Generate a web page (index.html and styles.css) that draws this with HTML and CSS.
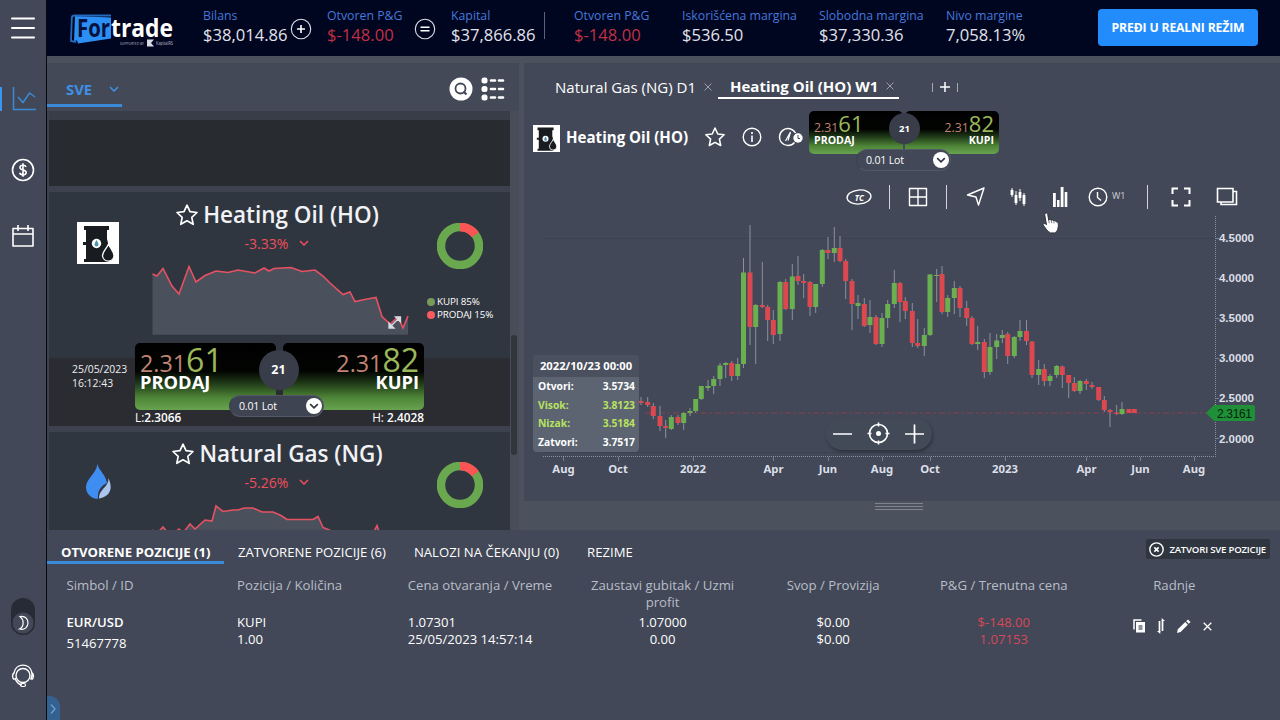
FILE: index.html
```html
<!DOCTYPE html>
<html lang="sr">
<head>
    <meta charset="UTF-8">
    <meta name="viewport" content="width=device-width, initial-scale=1.0">
    <title>Fortrade</title>
    <link rel="stylesheet" href="styles.css">
</head>
<body>
    <!-- Shared icons -->
    <svg class="sprite" width="0" height="0">
        <symbol id="star" viewBox="0 0 24 24">
            <path d="M12 2.200l3 6.500 7 .8-5.200 4.800 1.400 7-6.200-3.500-6.200 3.500 1.400-7L2 9.500l7-.8z" fill="none" stroke="#fff" stroke-width="1.700" stroke-linejoin="round"/>
        </symbol>
        <symbol id="barrel" viewBox="0 0 42 42">
            <rect width="42" height="42" fill="#fff"/>
            <path d="M7 4h25v4h-2v9l1 4v17h1v2H7v-3h2V23H6v-3h3V8H7z" fill="#181b20"/>
            <path d="M31.500 22c2 5 5.500 7.500 5.500 12a5.800 5.800 0 0 1-11.500 0c0-4.500 4-7 6-12z" fill="#181b20" stroke="#fff" stroke-width="1.300"/>
            <circle cx="19.500" cy="21.500" r="4.700" fill="#fff"/>
            <path d="M19.500 18c1 2 2 3 2 4.500a2 2 0 0 1-4 0c0-1.500 1-2.500 2-4.500z" fill="#4f93b5"/>
        </symbol>
        <symbol id="donut" viewBox="0 0 46 46">
            <circle cx="23" cy="23" r="19" fill="none" stroke="#6aa84f" stroke-width="8.500"/>
            <circle cx="23" cy="23" r="19" fill="none" stroke="#fb5454" stroke-width="8.500" pathLength="100" stroke-dasharray="15 85" transform="rotate(-90 23 23)"/>
        </symbol>
        <symbol id="down" viewBox="0 0 10 6">
            <path d="M1 1l4 4 4-4" fill="none" stroke="currentColor" stroke-width="1.500"/>
        </symbol>
        <symbol id="pick" viewBox="0 0 16 16">
            <circle cx="8" cy="8" r="8" fill="#fff"/>
            <path d="M4.200 6.200L8 9.800l3.800-3.600" fill="none" stroke="#30353f" stroke-width="1.700"/>
        </symbol>
    </svg>

    <div class="app">
        <!-- Sidebar -->
        <aside class="sidebar">
            <svg class="side-menu" width="24" height="24" viewBox="0 0 24 24"><path d="M1 2.500h22M1 12h22M1 21.500h22" stroke="#fff" stroke-width="2" stroke-linecap="round"/></svg>
            <div class="side-active">
                <svg width="24" height="24" viewBox="0 0 24 24"><path d="M1.500 0v22.500H24M6 10l5 5.500 6.500-9.500L23 10" fill="none" stroke="#3a8ad8" stroke-width="1.500"/></svg>
            </div>
            <svg class="side-dollar" width="24" height="24" viewBox="0 0 24 24"><circle cx="12" cy="12" r="10.500" fill="none" stroke="#fff" stroke-width="1.600"/><path d="M15 9c-.5-1.300-1.600-1.700-3-1.700-1.700 0-3 .8-3 2.200 0 3.200 6.200 1.700 6.200 5 0 1.500-1.400 2.300-3.200 2.300-1.600 0-2.900-.6-3.300-2M12 5.200v13.600" fill="none" stroke="#fff" stroke-width="1.600"/></svg>
            <svg class="side-calendar" width="24" height="24" viewBox="0 0 24 24"><path d="M2 4.500h20v17.500H2zM2 10h20M7 1v6M17 1v6" fill="none" stroke="#fff" stroke-width="1.600" stroke-linejoin="round"/></svg>
            <div class="theme-switch">
                <svg width="22" height="22" viewBox="0 0 22 22"><circle cx="11" cy="11" r="10.500" fill="#424857"/><path d="M8 4.500c6-1 8 3 8 6.500s-3 7.500-8.500 6c5-2.500 4.500-9.500.5-12.500z" fill="none" stroke="#fff" stroke-width="1.200"/></svg>
            </div>
            <svg class="side-support" width="24" height="24" viewBox="0 0 24 24"><circle cx="12" cy="11.500" r="7" fill="none" stroke="#fff" stroke-width="1.400"/><path d="M3.500 15.500C1 14.500 1 10 3 9 5-1.500 19-1.500 21 9c2 1 2 5.500-.5 6.500M4 14c1.500 5 4 6.500 7 7M20.500 8c1 2.500.5 5-1 7.500" fill="none" stroke="#fff" stroke-width="1.400"/><rect x="9.500" y="19.500" width="5" height="3" rx="1.500" fill="none" stroke="#fff" stroke-width="1.200"/></svg>
        </aside>

        <div class="content">
            <!-- Account bar -->
            <header class="topbar">
                <svg class="logo" width="110" height="40" viewBox="0 0 110 40">
                    <path d="M5 4l36 1.500v21L8 31.500l-1-3-3 .5z" fill="#2b8ff5"/>
                    <path d="M41 3.500H4.500Q2 3.500 1.800 6L1 29l5 1" fill="none" stroke="#2569bb" stroke-width="1.800"/>
                    <text x="7" y="25" class="logo-for" textLength="33" lengthAdjust="spacingAndGlyphs">For</text>
                    <text x="41" y="25" class="logo-trade" textLength="62" lengthAdjust="spacingAndGlyphs">trade</text>
                    <text x="50" y="32.500" class="logo-sub" textLength="24" lengthAdjust="spacingAndGlyphs">SUPPORTED BY</text>
                    <path d="M77 27.500h7l-3 3.500 3 3.500h-7z" fill="#d8dbe4"/>
                    <text x="86" y="33" class="logo-sub logo-partner" textLength="17" lengthAdjust="spacingAndGlyphs">KapitalRS</text>
                </svg>
                <div class="stats">
                    <div class="stat"><span>Bilans</span><b>$38,014.86</b></div>
                    <svg class="op" width="22" height="22" viewBox="0 0 22 22"><circle cx="11" cy="11" r="9.700" fill="none" stroke="#dfe2ea" stroke-width="1.100"/><path d="M7 11h8M11 7v8" stroke="#fff" stroke-width="1.600"/></svg>
                    <div class="stat loss"><span>Otvoren P&amp;G</span><b>$-148.00</b></div>
                    <svg class="op" width="22" height="22" viewBox="0 0 22 22"><circle cx="11" cy="11" r="9.700" fill="none" stroke="#dfe2ea" stroke-width="1.100"/><path d="M6.500 9.200h9M6.500 12.800h9" stroke="#fff" stroke-width="1.600"/></svg>
                    <div class="stat"><span>Kapital</span><b>$37,866.86</b></div>
                    <i class="stat-divider"></i>
                    <div class="stat loss"><span>Otvoren P&amp;G</span><b>$-148.00</b></div>
                    <div class="stat"><span>Iskorišćena margina</span><b>$536.50</b></div>
                    <div class="stat"><span>Slobodna margina</span><b>$37,330.36</b></div>
                    <div class="stat"><span>Nivo margine</span><b>7,058.13%</b></div>
                </div>
                <button class="real-btn">PREĐI U REALNI REŽIM</button>
            </header>

            <div class="workspace">
                <!-- Instrument list -->
                <section class="watch">
                    <div class="watch-head">
                        <div class="filter">SVE <svg width="10" height="6"><use href="#down"/></svg></div>
                        <svg class="search" width="24" height="24" viewBox="0 0 24 24"><circle cx="12" cy="12" r="11.500" fill="#fff"/><circle cx="11.500" cy="11.500" r="5" fill="none" stroke="#424857" stroke-width="1.800"/><path d="M14.500 14.500l3 3" stroke="#424857" stroke-width="2.200"/></svg>
                        <svg width="24" height="24" viewBox="0 0 24 24" fill="#fff"><rect x=".5" y=".5" width="6" height="6" rx="2.500"/><rect x=".5" y="9" width="6" height="6" rx="2.500"/><rect x=".5" y="17.500" width="6" height="6" rx="2.500"/><path d="M10 3.500h4M18 3.500h4M10 12h4M18 12h4M10 20.500h4M18 20.500h4" stroke="#fff" stroke-width="2.600" stroke-linecap="round"/></svg>
                    </div>
                    <div class="watch-body">
                        <div class="cards">
                            <div class="card card-prev"></div>
                            <article class="card card-full">
                                <div class="card-top">
                                    <svg class="card-icon" width="42" height="42"><use href="#barrel"/></svg>
                                    <div class="card-mid">
                                        <h2><svg width="24" height="24"><use href="#star"/></svg>Heating Oil (HO)</h2>
                                        <p class="change">-3.33% <svg width="10" height="6"><use href="#down"/></svg></p>
                                        <svg class="spark" width="258" height="76" viewBox="152 259 258 76">
                                            <path class="spark-fill" d="M152.500 333.700V273l4.500 2 6-7.500 9 17.500 7 8 10-27.500 7 15.500 9-6.500 11-4.500 12 1.500 10-2.500 17 3 9-5 5 3 5-2.500 17-1 11 4 13-1.500 8 6 7 7 13 11.500 7-2.500 5 9.500 12-2.500 9-1.500 6 19 8 7.500 8-7 5 11 5-12v18.700z"/>
                                            <path class="spark-line" d="M152.500 273l4.500 2 6-7.500 9 17.500 7 8 10-27.500 7 15.500 9-6.500 11-4.500 12 1.500 10-2.500 17 3 9-5 5 3 5-2.500 17-1 11 4 13-1.500 8 6 7 7 13 11.500 7-2.500 5 9.500 12-2.500 9-1.500 6 19 8 7.500 8-7 5 11 5-12"/>
                                            <path d="M391 325l7-7M389 322v5h5zM395.500 316h5v5z" fill="#d9dce2" stroke="#d9dce2" stroke-width="1.300"/>
                                        </svg>
                                    </div>
                                    <div class="card-side">
                                        <svg width="46" height="46"><use href="#donut"/></svg>
                                        <ul>
                                            <li class="buy">KUPI 85%</li>
                                            <li class="sell">PRODAJ 15%</li>
                                        </ul>
                                    </div>
                                </div>
                                <div class="card-bottom">
                                    <div class="stamp">25/05/2023<br>16:12:43</div>
                                    <div class="quote-col">
                                        <div class="quote">
                                            <div class="tile"><p>2.31<em>61</em></p><strong>PRODAJ</strong></div>
                                            <div class="tile right"><p>2.31<em>82</em></p><strong>KUPI</strong></div>
                                            <span class="spread">21</span>
                                            <div class="lot">0.01 Lot <svg width="16" height="16"><use href="#pick"/></svg></div>
                                        </div>
                                        <div class="range"><span>L:<b>2.3066</b></span><span>H: <b>2.4028</b></span></div>
                                    </div>
                                </div>
                            </article>
                            <article class="card card-next">
                                <div class="card-top">
                                    <svg class="card-icon" width="42" height="42" viewBox="0 0 42 42"><path d="M20.500 3c1 6 8.500 11 9.500 19-5 2-9 7-9 12.500 0 2-.3 2.500-.3 3.500C12 37 9 31 9 26c0-8 10-13 11.500-23z" fill="#3f8df0"/><path d="M31.500 17c2 5 2.500 8 2 11-1 5-5 8.500-11.500 9.500 0-4 1-6 4-9.500 3.500-3.500 5.500-6 5.500-11z" fill="#a9c4ee"/></svg>
                                    <div class="card-mid">
                                        <h2><svg width="24" height="24"><use href="#star"/></svg>Natural Gas (NG)</h2>
                                        <p class="change">-5.26% <svg width="10" height="6"><use href="#down"/></svg></p>
                                        <svg class="spark" width="258" height="76" viewBox="152 498 258 76">
                                            <path class="spark-fill" d="M152.500 574v-45l5 3 5.500-6 5 6h6l5-4 4 4 7-9 5 5 10-9 7 1 4-15 7 5.500 10-1.500h5l6-2h9l9 4h11l8 3.500 6 4h26l5-3 5 11 10 4 20 5h17l4-5 3-6 2 6 3 5h30v38z"/>
                                            <path class="spark-line" d="M152.500 529l5 3 5.500-6 5 6h6l5-4 4 4 7-9 5 5 10-9 7 1 4-15 7 5.500 10-1.500h5l6-2h9l9 4h11l8 3.500 6 4h26l5-3 5 11 10 4 20 5h17l4-5 3-6 2 6 3 5h30"/>
                                        </svg>
                                    </div>
                                    <div class="card-side"><svg width="46" height="46"><use href="#donut"/></svg></div>
                                </div>
                            </article>
                        </div>
                        <div class="scrollbar"><i></i></div>
                    </div>
                </section>

                <!-- Chart -->
                <section class="chart-col">
                    <div class="chart-panel">
                        <div class="chart-tabs">
                            <div class="chart-tab">Natural Gas (NG) D1 <svg width="8" height="8" viewBox="0 0 8 8"><path d="M.5.5l7 7M7.500.5l-7 7"/></svg></div>
                            <div class="chart-tab active">Heating Oil (HO) W1 <svg width="8" height="8" viewBox="0 0 8 8"><path d="M.5.5l7 7M7.500.5l-7 7"/></svg></div>
                            <svg class="tab-add" width="28" height="12" viewBox="0 0 28 12"><path d="M1.500 2v9M26.500 2v9" stroke="#a4a8b2"/><path d="M9 6h10M14 1v10" stroke="#fff" stroke-width="1.500"/></svg>
                        </div>
                        <div class="chart-title">
                            <svg width="27" height="27"><use href="#barrel"/></svg>
                            <h1>Heating Oil (HO)</h1>
                            <svg class="t-star" width="22" height="22"><use href="#star"/></svg>
                            <svg class="t-info" width="20" height="20" viewBox="0 0 20 20"><circle cx="10" cy="10" r="8.800" fill="none" stroke="#fff" stroke-width="1.400"/><path d="M10 8.500v6.500M10 5v2" stroke="#fff" stroke-width="1.600"/></svg>
                            <svg class="t-gauge" width="26" height="20" viewBox="0 0 26 20"><path d="M16.500 15.500a8.500 8.500 0 1 1 1-9.500" fill="none" stroke="#fff" stroke-width="1.400"/><path d="M7.500 14l5-9M10 13.500l2.500-8.500" stroke="#fff" stroke-width="1.200"/><circle cx="20" cy="11" r="4.700" fill="#fff"/><path d="M20 8v3.500h2" stroke="#424857" fill="none"/></svg>
                            <div class="quote small">
                                <div class="tile"><p>2.31<em>61</em></p><strong>PRODAJ</strong></div>
                                <div class="tile right"><p>2.31<em>82</em></p><strong>KUPI</strong></div>
                                <span class="spread">21</span>
                                <div class="lot">0.01 Lot <svg width="16" height="16"><use href="#pick"/></svg></div>
                            </div>
                        </div>
                        <div class="toolbar">
                            <svg class="tc" width="26" height="18" viewBox="0 0 26 18"><ellipse cx="13" cy="9" rx="12" ry="7" fill="none" stroke="#fff" stroke-width="1.300" transform="rotate(-5 13 9)"/><text x="13.300" y="12.500" text-anchor="middle">TC</text></svg>
                            <i></i>
                            <svg width="20" height="20" viewBox="0 0 20 20"><path d="M1.500 1.500h17v17h-17zM10 1.500v17M1.500 10h17" fill="none" stroke="#fff" stroke-width="1.400" stroke-linejoin="round"/></svg>
                            <i></i>
                            <svg width="20" height="20" viewBox="0 0 20 20"><path d="M18 1L1.500 8l8.500 2 2.500 8z" fill="none" stroke="#fff" stroke-width="1.400" stroke-linejoin="round"/></svg>
                            <svg width="16" height="20" viewBox="0 0 16 20"><path d="M2 1v9M6 4v14M10 2v12M14 6v13" stroke="#fff"/><path d="M2 3v5M6 8v8M10 5v6M14 8v9" stroke="#fff" stroke-width="2.800"/></svg>
                            <svg width="16" height="20" viewBox="0 0 16 20" fill="#fff"><path d="M1 6h2.800v14H1zM5 13h2.500v7H5zM8.700 0h2.800v20H8.700zM12.700 5h2.600v15h-2.600z"/></svg>
                            <div class="period"><svg width="20" height="20" viewBox="0 0 20 20"><circle cx="10" cy="10" r="8.800" fill="none" stroke="#fff" stroke-width="1.400"/><path d="M9.500 5v5.500l3.500 3" fill="none" stroke="#fff" stroke-width="1.400"/></svg>W1</div>
                            <i></i>
                            <svg width="20" height="20" viewBox="0 0 20 20"><path d="M1.500 7V1.500H7M13 1.500h5.500V7M18.500 13v5.500H13M7 18.500H1.500V13" fill="none" stroke="#fff" stroke-width="2"/></svg>
                            <svg width="22" height="20" viewBox="0 0 22 20"><path d="M1.500 1.500H17V15H1.500zM17 4.500h3.500v13H5V15" fill="none" stroke="#fff" stroke-width="1.600"/></svg>
                        </div>
                        <div class="chart">
                            <svg id="chartSvg" width="756" height="285" viewBox="524 216 756 285">
                                <path class="grid" d="M544 238.500H1215M544 452.500H1215"/>
                                <path class="axis" d="M1215.500 216V456.500H543"/>
                                <path class="ticks" d="M563.500 457v4M618.500 457v4M693.500 457v4M773.500 457v4M828.500 457v4M882.500 457v4M930.500 457v4M1005.500 457v4M1086.500 457v4M1140.500 457v4M1194.500 457v4M1216 238.500h3M1216 278.500h3M1216 318.500h3M1216 358.500h3M1216 398.500h3M1216 438.500h3"/>
                                <path class="price-line" d="M645 413H1208"/>
                                <g id="candles"></g>
                                <path d="M1206 413l8-8h39q2 0 2 2v12q0 2-2 2h-39z" fill="#1f8f38"/>
                                <text class="price-tag" x="1217" y="417.500" textLength="35">2.3161</text>
                                <g id="labels" class="labels"></g>
                            </svg>
                            <div class="ohlc">
                                <h3>2022/10/23 00:00</h3>
                                <dl>
                                    <div><dt>Otvori:</dt><dd>3.5734</dd></div>
                                    <div class="hl"><dt>Visok:</dt><dd>3.8123</dd></div>
                                    <div class="hl"><dt>Nizak:</dt><dd>3.5184</dd></div>
                                    <div><dt>Zatvori:</dt><dd>3.7517</dd></div>
                                </dl>
                            </div>
                            <div class="zoom-ctl">
                                <svg width="106" height="32" viewBox="0 0 106 32"><path d="M7 16h19M79 16h19M88.500 6.500v19" stroke="#fff" stroke-width="1.700"/><circle cx="52.500" cy="15.500" r="9" fill="none" stroke="#fff" stroke-width="1.600"/><circle cx="52.500" cy="15.500" r="2.500" fill="#fff"/><path d="M52.500 4.500v4M52.500 22.500v4M41.500 15.500h4M59.500 15.500h4" stroke="#fff" stroke-width="1.600"/></svg>
                            </div>
                            <svg class="cursor" width="18" height="22" viewBox="0 0 18 22"><path d="M3.500 1.200c1.200-.6 2 0 2.200 1l1 6c.5-.9 2-.9 2.500.2.800-.8 2.100-.5 2.500.5 1-.6 2.200-.1 2.500 1 1.500-.3 2 .8 2.100 2 .2 4-.8 8-3.800 9H8.500C5 19.500 3 15 1 12.700c0-1.500 2-1.500 3.500 0L2.700 2.800z" fill="#fff" stroke="#24272e" stroke-width=".9"/><path d="M6.700 8.200l.5 3M9.300 8.600l.4 2.600M11.800 9.200l.3 2.300" stroke="#555a64" stroke-width=".8"/></svg>
                        </div>
                    </div>
                    <div class="drag"><i></i></div>
                </section>
            </div>

            <!-- Positions -->
            <section class="positions">
                <nav class="pos-tabs">
                    <a class="active">OTVORENE POZICIJE (1)</a>
                    <a>ZATVORENE POZICIJE (6)</a>
                    <a>NALOZI NA ČEKANJU (0)</a>
                    <a>REZIME</a>
                    <button class="close-all"><svg width="15" height="15" viewBox="0 0 14 14"><circle cx="7" cy="7" r="6.200" fill="none" stroke="#fff" stroke-width="1.300"/><path d="M5 5l4 4M9 5L5 9" stroke="#fff" stroke-width="1.500"/></svg>ZATVORI SVE POZICIJE</button>
                </nav>
                <div class="pos-row pos-head">
                    <div>Simbol / ID</div>
                    <div>Pozicija / Količina</div>
                    <div>Cena otvaranja / Vreme</div>
                    <div>Zaustavi gubitak / Uzmi profit</div>
                    <div>Svop / Provizija</div>
                    <div>P&amp;G / Trenutna cena</div>
                    <div>Radnje</div>
                </div>
                <div class="pos-row">
                    <div class="symbol"><b>EUR/USD</b><br>51467778</div>
                    <div>KUPI<br>1.00</div>
                    <div>1.07301<br>25/05/2023 14:57:14</div>
                    <div>1.07000<br>0.00</div>
                    <div>$0.00<br>$0.00</div>
                    <div class="red">$-148.00<br>1.07153</div>
                    <div class="actions">
                        <svg width="12" height="14" viewBox="0 0 12 14"><path d="M1 10.500V1h7.500" fill="none" stroke="#fff" stroke-width="1.500"/><path d="M3 3h9v10.500H3z" fill="#fff"/><path d="M5.500 6h4v5h-4z" fill="#8b909b"/></svg>
                        <svg width="8" height="16" viewBox="0 0 8 16"><path d="M2.500 3v11M5.500 2v11" stroke="#fff" stroke-width="1.700"/><path d="M0 13h3.300v3zM4.700 3H8L4.700 0z" fill="#fff"/></svg>
                        <svg width="14" height="14" viewBox="0 0 14 14" fill="#fff"><path d="M0 14l.8-3.700 7.400-7.200 2.700 2.700L3.600 13zM9.200 2.200L11 .5 13.500 3l-1.700 1.800z"/></svg>
                        <svg width="9" height="9" viewBox="0 0 9 9"><path d="M.7.7l7.600 7.600M8.300.7L.7 8.300" stroke="#fff" stroke-width="1.300"/></svg>
                    </div>
                </div>
                <div class="expander"><svg width="6" height="10" viewBox="0 0 6 10"><path d="M1 .5l4 4.500-4 4.500" fill="none" stroke="#6ba3d9" stroke-width="1.200"/></svg></div>
            </section>
        </div>
    </div>
    <script src="chart.js"></script>
</body>
</html>
```
FILE: styles.css
```css
* {
    margin: 0;
    padding: 0;
    box-sizing: border-box;
}

body {
    font-family: 'Open Sans', 'Noto Sans', sans-serif;
    background: #424857;
    color: #fff;
    overflow: hidden;
}

svg {
    display: block;
    flex: none;
}

.sprite {
    position: absolute;
}

.app {
    display: flex;
    width: 1280px;
    height: 720px;
}

/* Sidebar */
.sidebar {
    width: 47px;
    flex: none;
    display: flex;
    flex-direction: column;
    align-items: center;
    padding-top: 16px;
    border-right: 1px solid #07090f;
    background: #424857;
}

.side-active {
    width: 100%;
    height: 24px;
    margin-top: 47px;
    padding-left: 9px;
    border-left: 2px solid #3a96ee;
}

.side-active svg {
    margin-left: 1px;
}

.side-dollar {
    margin-top: 47px;
}

.side-calendar {
    margin-top: 42px;
}

.theme-switch {
    width: 24px;
    height: 37px;
    margin-top: 350px;
    padding: 14px 1px 0;
    border-radius: 12px;
    background: #272b36;
}

.side-support {
    margin-top: 29px;
}

/* Account bar */
.content {
    flex: 1;
    display: flex;
    flex-direction: column;
    min-width: 0;
}

.topbar {
    height: 56px;
    flex: none;
    display: flex;
    align-items: flex-start;
    background: #010620;
}

.logo {
    margin: 12px 0 0 23px;
    font-weight: 700;
}

.logo-for {
    font-size: 25px;
    fill: #06133d;
}

.logo-trade {
    font-size: 25px;
    fill: #fff;
}

.logo-sub {
    font-size: 4px;
    font-weight: 400;
    fill: #b7bbc8;
}

.logo-partner {
    font-size: 5px;
}

.stats {
    display: grid;
    grid-template-columns: 87px 37px 87px 37px 93px 30px 108px 137px 127px 152px;
    margin-left: 23px;
    padding-top: 6px;
}

.stat span,
.stat b {
    display: block;
    white-space: nowrap;
    font-weight: 400;
}

.stat span {
    padding-top: 1px;
    font-size: 12.3px;
    line-height: 18px;
    color: #4478db;
}

.stat b {
    font-size: 16.6px;
    line-height: 20px;
    color: #e2e2ec;
}

.stat.loss b {
    color: #c03044;
}

.op {
    margin-top: 12px;
}

.stat-divider {
    width: 1px;
    height: 27px;
    margin-top: 6px;
    background: #5d6274;
}

.real-btn {
    width: 160px;
    height: 37px;
    margin-top: 9px;
    border: none;
    border-radius: 4px;
    background: #228cfc;
    color: #fff;
    font: 700 12.2px 'Open Sans', sans-serif;
    letter-spacing: -0.15px;
    white-space: nowrap;
}

/* Workspace */
.workspace {
    height: 474px;
    flex: none;
    display: flex;
    background: #4c515e;
    padding-top: 7px;
}

.watch {
    width: 472px;
    flex: none;
    background: #434957;
}

.watch-head {
    height: 48px;
    display: flex;
    align-items: center;
    padding-right: 14px;
}

.filter {
    width: 75px;
    height: 31px;
    margin-top: 9px;
    display: flex;
    align-items: center;
    justify-content: space-between;
    padding: 0 3px 3px 19px;
    border-bottom: 3px solid #3a8ad8;
    color: #3f90e6;
    font-size: 14.8px;
    font-weight: 700;
}

.search {
    margin: 4px 8px 0 auto;
}

.search + svg {
    margin-top: 4px;
}

.watch-body {
    height: 419px;
    display: flex;
    overflow: hidden;
}

.cards {
    width: 463px;
    padding-left: 2px;
    background: #3d424e;
}

.card {
    background: #30363f;
}

.card-prev {
    height: 75px;
    margin-bottom: 6px;
    border-top: 9px solid #383d48;
    background: #282b30;
}

.card-full {
    height: 234px;
    padding-top: 1px;
    margin-bottom: 6px;
    background: linear-gradient(#30363f 165px, #2a2c31 167px);
}

.card-next {
    height: 110px;
}

.card-top {
    height: 150px;
    display: flex;
}

.card-icon {
    margin: 29px 0 0 28px;
}

.card-mid {
    width: 276px;
    margin-left: 23px;
    margin-right: 8px;
}

.card-mid h2 {
    height: 35px;
    padding-top: 9px;
    display: flex;
    justify-content: center;
    align-items: center;
    gap: 4px;
    padding-right: 6px;
    font-size: 22.5px;
    font-weight: 600;
    line-height: 32px;
    white-space: nowrap;
    color: #f1f2f5;
}

.change {
    display: flex;
    justify-content: center;
    align-items: center;
    gap: 11px;
    height: 18px;
    margin-top: 6px;
    padding-right: 6px;
    margin-bottom: 8px;
    font-size: 14px;
    font-weight: 500;
    color: #f04e5c;
}

.spark {
    margin-left: 10px;
}

.spark-fill {
    fill: #4b515c;
}

.spark-line {
    fill: none;
    stroke: #e65263;
    stroke-width: 1.6;
}

.card-side {
    flex: none;
    width: 84px;
    padding-top: 30px;
}

.card-side > svg {
    margin-left: 11px;
}

.card-side ul {
    list-style: none;
    margin-top: 26px;
    padding-left: 1px;
}

.card-side li {
    display: flex;
    align-items: center;
    gap: 2px;
    height: 13px;
    font-size: 9.8px;
    letter-spacing: -0.1px;
    white-space: nowrap;
}

.card-side li::before {
    content: '';
    width: 8px;
    height: 8px;
    border-radius: 50%;
    background: #7a9a5c;
}

.card-side .sell::before {
    background: #fb5b5e;
}

.card-bottom {
    display: flex;
}

.stamp {
    width: 86px;
    padding: 19px 0 0 23px;
    font-size: 10.4px;
    line-height: 14px;
    color: #eceef2;
}

.range {
    display: flex;
    justify-content: space-between;
    font-size: 11.8px;
    line-height: 15px;
}

.range b {
    font-weight: 600;
}

/* Sell / buy tiles, the spread and lot size sit on top of them */
.quote {
    position: relative;
    display: flex;
    gap: 7px;
    width: 289px;
    height: 67px;
}

.tile {
    flex: 1;
    padding: 1px 5px;
    border-radius: 5px;
    background: linear-gradient(#000 0, #020402 42%, #1f3a18 60%, #4f8638 82%, #68a350);
}

.tile.right {
    text-align: right;
}

.tile p {
    font-size: 23.3px;
    line-height: 30px;
    height: 29px;
    color: #c08372;
}

.tile em {
    font-style: normal;
    font-size: 32px;
    line-height: 1;
    color: #9cb85a;
}

.tile strong {
    display: block;
    font-size: 18.3px;
    line-height: 18px;
}

.spread {
    position: absolute;
    left: 50%;
    top: 7px;
    width: 40px;
    margin-left: -21px;
    border-radius: 50%;
    background: #383d49;
    text-align: center;
    font-size: 12.5px;
    font-weight: 700;
    line-height: 40px;
}

.lot {
    position: absolute;
    left: 94px;
    top: 52px;
    width: 95px;
    height: 22px;
    display: flex;
    align-items: center;
    justify-content: space-between;
    padding: 0 2px 1px 9px;
    border: 1px solid #525865;
    border-left-color: #3c424f;
    border-radius: 11px;
    background: #3e4451;
    font-size: 10.6px;
    letter-spacing: -0.2px;
}

.lot svg {
    margin-right: -1px;
}

.small {
    width: 190px;
    height: 43px;
    gap: 2px;
}

.small .tile p {
    font-size: 12.3px;
    line-height: 22px;
    height: 22px;
}

.small .tile em {
    font-size: 22px;
}

.small .tile strong {
    font-size: 10.6px;
    line-height: 13px;
}

.small .spread {
    top: 2px;
    width: 31px;
    margin-left: -15px;
    font-size: 9.5px;
    line-height: 31px;
}

.small .lot {
    left: 47px;
    top: 38px;
    background: #424857;
}

.scrollbar {
    width: 9px;
    padding: 224px 2px 0 1px;
    background: #484d59;
}

.scrollbar i {
    display: block;
    height: 120px;
    border-radius: 3px;
    background: #31353c;
}

/* Chart */
.chart-col {
    flex: 1;
    margin-left: 5px;
}

.chart-panel {
    height: 438px;
    background: #424857;
}

.chart-tabs {
    height: 37px;
    display: flex;
    padding-left: 21px;
}

.chart-tab {
    height: 36px;
    display: flex;
    align-items: center;
    gap: 8px;
    padding: 12px 6px 0 10px;
    font-size: 15px;
    white-space: nowrap;
}

.chart-tab svg {
    fill: none;
    stroke: #9a9ea9;
    stroke-width: 1;
}

.chart-tab.active {
    padding-left: 12px;
    padding-right: 5px;
    border-bottom: 2px solid #fff;
    font-weight: 700;
}

.tab-add {
    margin: 18px 0 0 32px;
}

.chart-title {
    height: 74px;
    display: flex;
    align-items: center;
    padding: 2px 0 0 9px;
}

.chart-title h1 {
    width: 144px;
    margin-top: -3px;
    padding-left: 6px;
    font-size: 15.1px;
    white-space: nowrap;
}

.t-star,
.t-info,
.t-gauge {
    margin-top: -2px;
}

.t-info {
    margin-left: 16px;
}

.t-gauge {
    margin-left: 16px;
}

.chart-title .quote {
    margin-left: 5px;
    margin-top: -11px;
}

.toolbar {
    height: 42px;
    padding-top: 3px;
    padding-left: 322px;
    display: grid;
    grid-template-columns: 43px 19px 38px 20px 44px 42px 36px 59px 24px 45px 30px;
    align-items: center;
}

.toolbar i {
    width: 1px;
    height: 24px;
    background: #d3d6dc;
}

.tc text {
    font: italic 700 8px 'Open Sans', sans-serif;
    fill: #fff;
}

.period {
    display: flex;
    gap: 4px;
    font-size: 9px;
    line-height: 18px;
    color: #cfd2da;
}

.chart {
    position: relative;
}

.grid {
    stroke: #363c49;
    stroke-dasharray: 1 1;
}

.axis {
    fill: none;
    stroke: #8d929e;
    stroke-dasharray: 1 1;
}

.ticks {
    stroke: #777c89;
    fill: none;
}

.price-line {
    stroke: #8a3f4e;
    stroke-dasharray: 6 3 2 3;
}

.labels text {
    font: 700 11.5px 'Liberation Sans', sans-serif;
    fill: #dcdfe7;
}

.labels .time {
    font: 700 11.3px 'Noto Sans', sans-serif;
    text-anchor: middle;
}

.price-tag {
    font: 12px 'Liberation Sans', sans-serif;
    fill: #06250f;
}

.wick {
    stroke: #8b909c;
    stroke-width: 1;
}

.up {
    fill: #6aaf50;
}

.down {
    fill: #dc4850;
}

.ohlc {
    position: absolute;
    left: 9px;
    top: 139px;
    width: 106px;
    height: 97px;
    border-radius: 4px;
    background: rgba(94, 103, 116, 0.92);
    overflow: hidden;
    font-weight: 700;
}

.ohlc h3 {
    height: 22px;
    line-height: 22px;
    text-align: center;
    font-size: 11.2px;
    background: #4a505e;
}

.ohlc dl {
    padding: 0 4px 0 5px;
}

.ohlc dl div {
    display: flex;
    justify-content: space-between;
    height: 18.7px;
    line-height: 18.7px;
    font-size: 10.3px;
}

.ohlc .hl {
    color: #b8e25f;
}

.zoom-ctl {
    position: absolute;
    left: 302px;
    top: 202px;
    border-radius: 16px;
    background: #434a57;
    box-shadow: 1px 2px 3px rgba(20, 24, 34, 0.45);
}

.cursor {
    position: absolute;
    left: 518px;
    top: -4px;
}

.drag {
    padding-top: 2px;
}

.drag i {
    display: block;
    width: 48px;
    height: 7px;
    margin-left: 351px;
    border: solid #7f8490;
    border-width: 1px 0;
    background: linear-gradient(transparent 2px, #7f8490 2px, #7f8490 3px, transparent 3px);
}

/* Positions */
.positions {
    position: relative;
    flex: 1;
    background: #424857;
}

.pos-tabs {
    height: 34px;
    display: flex;
    font-size: 13.15px;
    white-space: nowrap;
}

.pos-tabs a {
    height: 34px;
    padding: 11px 14px 0 14px;
    line-height: 22px;
}

.pos-tabs .active {
    width: 177px;
    font-weight: 700;
    border-bottom: 3px solid #3a8ad8;
}

.close-all {
    height: 20px;
    margin: 9px 10px 0 auto;
    padding: 0 4px 0 3px;
    display: flex;
    align-items: center;
    gap: 5px;
    border: none;
    border-radius: 2px;
    background: #30363f;
    color: #fff;
    font: 600 9.6px 'Open Sans', sans-serif;
    letter-spacing: -0.2px;
}

.pos-row {
    display: grid;
    grid-template-columns: repeat(7, 170.6px);
    padding-left: 19.500px;
    font-size: 13.1px;
    line-height: 17px;
}

.pos-row > div:nth-child(n+4) {
    text-align: center;
    padding: 0 12px 0 10px;
}

.pos-head {
    height: 50px;
    padding-top: 13px;
    font-size: 13.2px;
    color: #b9bdc7;
}

.symbol {
    margin-top: -2px;
    line-height: 21px;
}

.symbol b {
    font-weight: 600;
}

.red {
    color: #d84758;
}

.pos-row > .actions:last-child {
    display: flex;
    align-items: center;
    height: 24px;
    padding: 0 0 0 43px;
    gap: 12px;
}

.expander {
    position: absolute;
    left: 0;
    bottom: 0;
    width: 13px;
    height: 24px;
    padding: 8px 0 0 3px;
    border-radius: 0 10px 0 0;
    background: #34618f;
}
```
FILE: chart.js
```js
// x, high, body top, body bottom, low, direction
const candles = [
    [641,397,401,403,405,0],[647.7,397,402,405,407,0],[653.3,403,406,416,419,0],[660,406,416,426,431,0],
    [665.7,420,426,428,438,0],[671.3,415,417,429,430,1],[678,415,417,423,425,0],[683.7,412,413,423,430,1],
    [690,408,411,413,416,1],[695.7,399,399,411,413,1],[701.3,386,386,399,400,1],[708,380,386,388,391,1],
    [713.7,376,379,386,394,1],[720,363,365.5,379,386,1],[725.7,362,363,365,378,1],[731.7,361,363,376,381,0],
    [737.7,358,364,376,380,1],[743.5,258,272.5,364,368,1],[750,225,272.5,327,345,0],[755.7,304,305,327,364,1],
    [762.3,262,305,307,308,0],[767.7,305,307,320,341,0],[773.3,310,320,335,344,0],[780,281,282,334,341,1],
    [785.7,279,282,309,310,0],[792.3,264,276.5,309,320,1],[798,256,276,281,285,0],[803.7,274,281,283,298,0],
    [810,281,282,307,316,0],[815.7,284,284,307,313,1],[822.3,249,250,284,287,1],[828,237,250,253,259,0],
    [834.3,227,248,253,262,1],[840,236,248,261,262,0],[845.7,259,261,281,299,0],[852,279,281,304,330,0],
    [858,295,303,306,319,1],[864.3,298,304,326,327,0],[870,300,317,325,333,1],[876,315,317,344,345,0],
    [882,313,318,344,347,1],[887.7,300,304,318,328,1],[894.3,270,283,304,308,1],[900,282,283,302,322,0],
    [905.3,297,301,311,319,0],[912.3,303,311,343,347,0],[917.7,319,343,346,348,0],[924.3,328,335,346,356,1],
    [930,274,274.5,335,336,1],[936.7,269,275,276,302,1],[942,266,274,312,314,0],[947.7,295,298,312,317,1],
    [954.3,281,288,298,314,1],[960,286,288,308,317,0],[966.7,301,308,318,326,0],[972,316,318,344,345,0],
    [977.7,326,342,344,350,1],[984.3,339,342,372,378,0],[990,333,347,372,375,1],[996.7,334,340.5,347,359,1],
    [1002.3,330,335,338,343,1],[1007.7,332,334,356,364,0],[1014.3,336,337,356,358,1],[1020,320,331,337,341,1],
    [1026.5,320,331,341,345,0],[1032,341,341.5,375,378,0],[1038.7,360,369,375,385,1],[1044.3,364,369,381,386,0],
    [1050,374,376,381,386,1],[1056.7,365,366,375,378,1],[1062.3,365.5,366.5,375,388,0],[1068.7,375,375,383,398,0],
    [1074.3,377,383,391,392,0],[1080,380,381,391,394,1],[1086.3,379,381,384,390,0],[1092,382,385,387,389,0],
    [1098.7,387,387,400,401,0],[1104.3,396,400,410,412,0],[1110,409,410,412,427,0],[1116.7,405,412.5,414,415,0],
    [1122,402,409,414,415,1],[1129,409,409,413,413,0],[1134.3,409,409,413,413,0]
];

const times = [[563.5,'Aug'],[618,'Oct'],[693,'2022'],[773.5,'Apr'],[828,'Jun'],[882,'Aug'],[930,'Oct'],
    [1005,'2023'],[1086.5,'Apr'],[1140.5,'Jun'],[1194,'Aug']];

let bars = '';
candles.forEach(([x, high, top, bottom, low, up]) => {
    bars += `<path class="wick" d="M${x} ${high}V${low}"/>`;
    bars += `<rect class="${up ? 'up' : 'down'}" x="${x - 2.5}" y="${top}" width="5" height="${bottom - top}"/>`;
});
document.getElementById('candles').innerHTML = bars;

let labels = '';
times.forEach(([x, name]) => {
    labels += `<text class="time" x="${x}" y="473">${name}</text>`;
});
for (let i = 0; i < 6; i++) {
    labels += `<text x="1219" y="${242 + i * 40.1}" textLength="35">${(4.5 - i * 0.5).toFixed(4)}</text>`;
}
document.getElementById('labels').innerHTML = labels;
```
